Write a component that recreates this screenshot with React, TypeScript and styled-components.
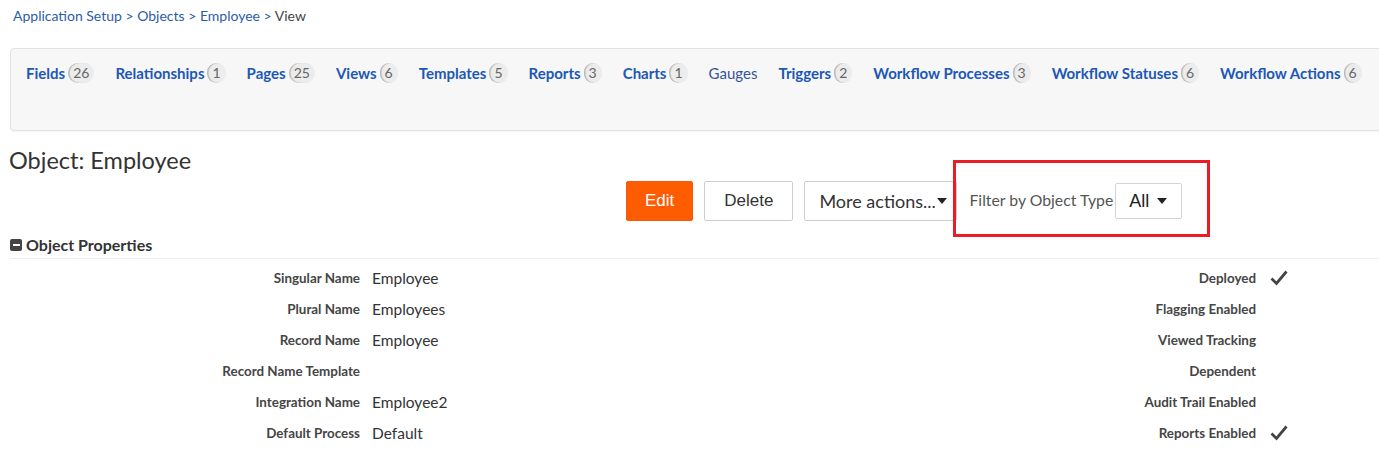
import styled, { createGlobalStyle } from 'styled-components'

const GlobalStyle = createGlobalStyle`
  body {
    margin: 0;
    background: #fff;
    font-family: Lato, "Open Sans", sans-serif;
    color: #333;
  }
`

const tabs = [
  { name: 'Fields', count: 26 },
  { name: 'Relationships', count: 1 },
  { name: 'Pages', count: 25 },
  { name: 'Views', count: 6 },
  { name: 'Templates', count: 5 },
  { name: 'Reports', count: 3 },
  { name: 'Charts', count: 1 },
  { name: 'Gauges' },
  { name: 'Triggers', count: 2 },
  { name: 'Workflow Processes', count: 3 },
  { name: 'Workflow Statuses', count: 6 },
  { name: 'Workflow Actions', count: 6 },
]

const props = [
  { label: 'Singular Name', value: 'Employee', flag: 'Deployed', checked: true },
  { label: 'Plural Name', value: 'Employees', flag: 'Flagging Enabled' },
  { label: 'Record Name', value: 'Employee', flag: 'Viewed Tracking' },
  { label: 'Record Name Template', value: '', flag: 'Dependent' },
  { label: 'Integration Name', value: 'Employee2', flag: 'Audit Trail Enabled' },
  { label: 'Default Process', value: 'Default', flag: 'Reports Enabled', checked: true },
]

const Page = styled.div`
  width: 1379px;
  height: 456px;
  overflow: hidden;
`

const Breadcrumb = styled.div`
  padding: 6px 0 0 13px;
  font-size: 14px;
  line-height: 20px;
  color: #2b5ca8;

  span {
    color: #444;
  }
`

const TabPanel = styled.div`
  box-sizing: border-box;
  margin: 22px -20px 0 10px;
  height: 83px;
  background: #f7f7f8;
  border: 1px solid #e2e2e4;
  border-radius: 4px;
  box-shadow: 0 1px 2px rgba(0, 0, 0, 0.04);
  display: flex;
  align-items: flex-start;
  padding: 13px 0 0 15px;
  gap: 21px;
  white-space: nowrap;
`

const Tab = styled.a<{ $plain?: boolean }>`
  display: flex;
  align-items: center;
  gap: 3px;
  font-size: 15px;
  line-height: 22px;
  font-weight: ${(p) => (p.$plain ? 400 : 700)};
  color: ${(p) => (p.$plain ? '#34549a' : '#1c58b5')};
  text-decoration: none;
`

const Badge = styled.span`
  display: inline-block;
  height: 20px;
  padding: 0 5px;
  border-radius: 10px;
  background: #ececec;
  box-shadow: inset 1.5px 0 1px #b8b8b8;
  color: #666;
  font-size: 14px;
  font-weight: 400;
  line-height: 20px;
  text-align: center;
`

const Title = styled.h1`
  margin: 15px 0 0 9px;
  font-size: 23.5px;
  font-weight: 400;
  line-height: 28px;
  color: #333;
`

const ActionRow = styled.div`
  margin: 7px 0 0 626px;
  display: flex;
  align-items: center;
  gap: 11px;
`

const Button = styled.button<{ $primary?: boolean }>`
  height: 40px;
  padding: 0 ${(p) => (p.$primary ? '18px' : '19px')};
  border: 1px solid ${(p) => (p.$primary ? '#f55a04' : '#cfcfcf')};
  border-radius: 2px;
  background: ${(p) => (p.$primary ? '#fe5c03' : '#fff')};
  color: ${(p) => (p.$primary ? '#fff' : '#333')};
  font-family: "Liberation Sans", Arial, sans-serif;
  font-size: 17px;
  display: flex;
  align-items: center;
  gap: 1px;
`

const MenuButton = styled(Button)`
  font-family: Lato, sans-serif;
  font-size: 18px;
  padding: 0 9px 0 14px;
  width: 153px;
`

const FilterGroup = styled.div`
  position: relative;
  display: flex;
  align-items: center;
  gap: 2px;
  margin-left: 1px;

  &::after {
    content: '';
    position: absolute;
    left: -16px;
    right: -28px;
    top: -23px;
    bottom: -18px;
    border: 3px solid #ec1c24;
    pointer-events: none;
  }
`

const FilterLabel = styled.span`
  font-size: 15.8px;
  color: #555;
  margin-top: -4px;
`

const Select = styled.div`
  height: 36px;
  width: 67px;
  box-sizing: border-box;
  border: 1px solid #d4d4d4;
  border-radius: 2px;
  display: flex;
  align-items: center;
  padding-left: 13px;
  gap: 8px;
  font-family: "Liberation Sans", Arial, sans-serif;
  font-size: 18px;
  color: #222;
`

const SectionHeader = styled.div`
  margin: 14px 0 0 10px;
  padding-bottom: 3px;
  border-bottom: 1px solid #eeeeee;
  display: flex;
  align-items: center;
  gap: 4px;
  font-size: 16px;
  font-weight: 700;
  line-height: 20px;
  color: #333;
`

const Collapse = styled.span`
  width: 12px;
  height: 12px;
  border-radius: 2px;
  background: #444;
  display: flex;
  align-items: center;
  justify-content: center;

  &::before {
    content: '';
    width: 7px;
    height: 2px;
    background: #fff;
  }
`

const Properties = styled.div`
  margin-top: 3px;
`

const PropRow = styled.div`
  display: grid;
  grid-template-columns: 360px 1fr auto 111px;
  column-gap: 12px;
  align-items: center;
  height: 31px;
`

const Label = styled.span`
  text-align: right;
  font-size: 13.4px;
  font-weight: 700;
  color: #454545;
`

const Value = styled.span`
  font-size: 15.5px;
  color: #333;
`

const CheckCell = styled.span`
  padding-left: 2px;
  display: flex;
  align-items: center;
  height: 20px;
`

const Caret = () => (
  <svg width="10" height="6" viewBox="0 0 10 6">
    <path d="M0 0h10L5 6z" fill="#222" />
  </svg>
)

const Check = () => (
  <svg width="18" height="16" viewBox="0 0 18 16">
    <path d="M1.5 8.5 6.5 13.5 16.5 1.5" fill="none" stroke="#444" strokeWidth="2.8" strokeLinejoin="miter" />
  </svg>
)

export default function App() {
  return (
    <Page>
      <GlobalStyle />
      <Breadcrumb>
        Application Setup &gt; Objects &gt; Employee &gt; <span>View</span>
      </Breadcrumb>
      <TabPanel>
        {tabs.map((t) => (
          <Tab key={t.name} $plain={t.count === undefined}>
            {t.name}
            {t.count !== undefined && <Badge>{t.count}</Badge>}
          </Tab>
        ))}
      </TabPanel>
      <Title>Object: Employee</Title>
      <ActionRow>
        <Button $primary>Edit</Button>
        <Button>Delete</Button>
        <MenuButton>
          More actions...
          <Caret />
        </MenuButton>
        <FilterGroup>
          <FilterLabel>Filter by Object Type</FilterLabel>
          <Select>
            All
            <Caret />
          </Select>
        </FilterGroup>
      </ActionRow>
      <SectionHeader>
        <Collapse />
        Object Properties
      </SectionHeader>
      <Properties>
        {props.map((p) => (
          <PropRow key={p.label}>
            <Label>{p.label}</Label>
            <Value>{p.value}</Value>
            <Label>{p.flag}</Label>
            <CheckCell>{p.checked && <Check />}</CheckCell>
          </PropRow>
        ))}
      </Properties>
    </Page>
  )
}
